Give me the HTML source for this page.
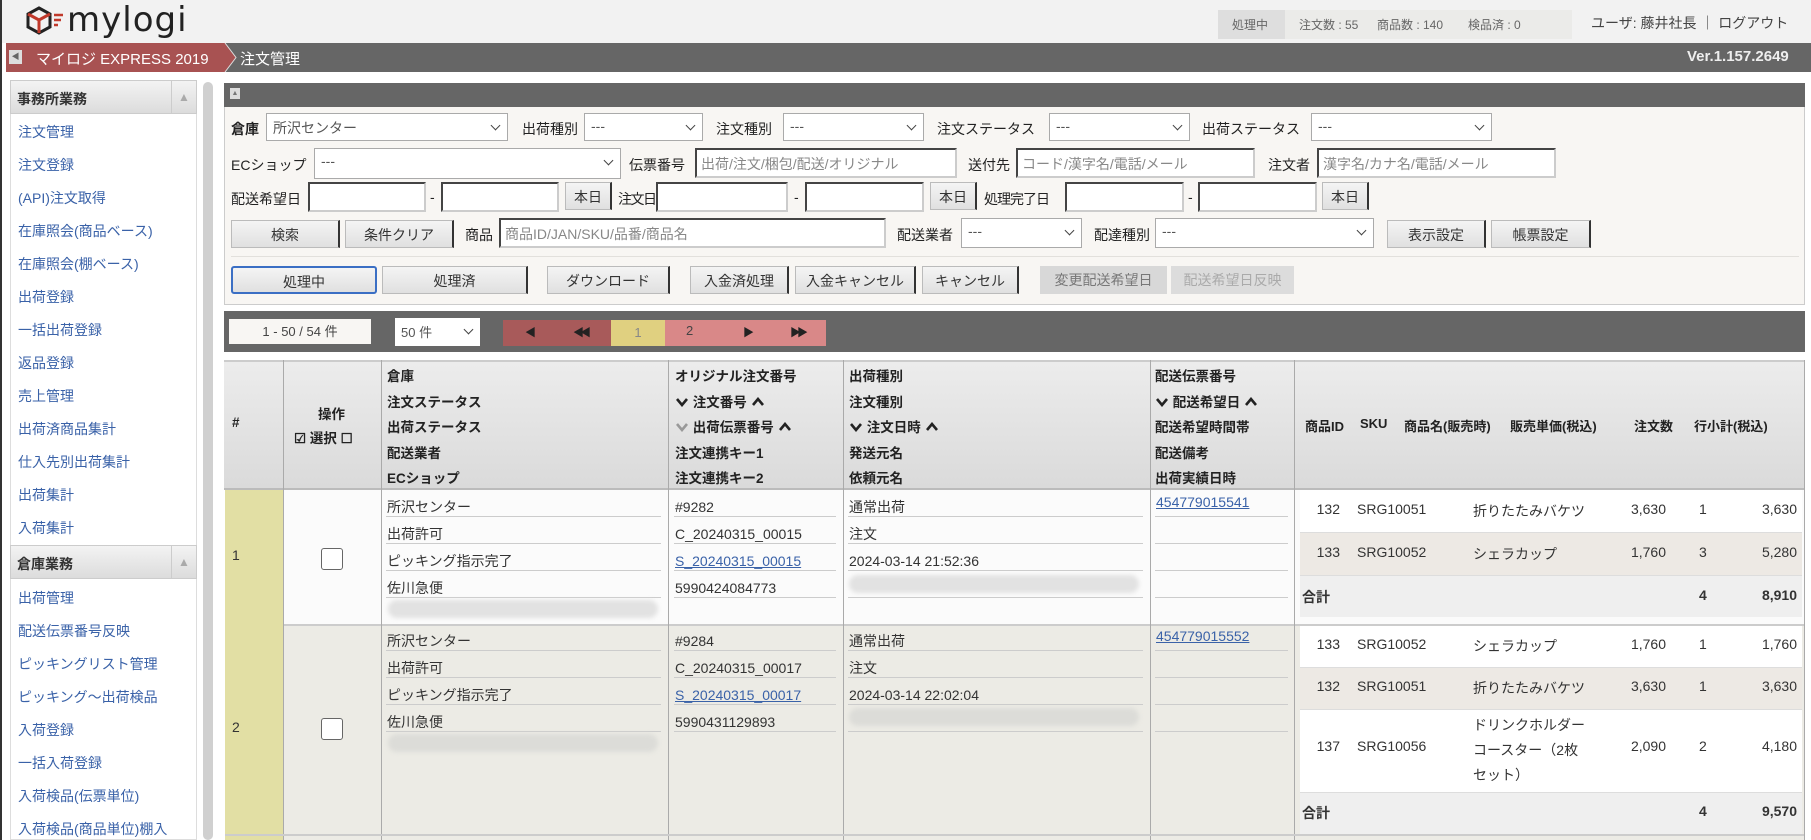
<!DOCTYPE html>
<html><head><meta charset="utf-8">
<style>
*{box-sizing:border-box;margin:0;padding:0}
body{width:1811px;height:840px;overflow:hidden;background:#fff;font-family:"Liberation Sans","Noto Sans CJK JP",sans-serif;font-size:14px;color:#333;position:relative}
.a{position:absolute;white-space:nowrap}
.sel{position:absolute;background:#fff;border:1px solid #aaa;height:28px;font-size:14px;color:#555;padding:4px 6px}
.sel:after{content:"";position:absolute;right:8px;top:8px;width:6px;height:6px;border-right:1.5px solid #444;border-bottom:1.5px solid #444;transform:rotate(45deg)}
.inp{position:absolute;background:#fff;border:2px solid #444;border-right-color:#ccc;border-bottom-color:#ccc;height:30px;font-size:14px;color:#888;padding:4px 4px}
.btn{position:absolute;background:linear-gradient(#f4f4f4,#e0e0e0);border:1px solid #bbb;border-right:2px solid #333;height:28px;font-size:14px;color:#333;text-align:center;line-height:28px}
.lbl{position:absolute;font-size:14px;color:#222;white-space:nowrap}
.side a{display:block;position:absolute;left:18px;color:#3a62a8;font-size:14px;text-decoration:none;white-space:nowrap}
.sh{position:absolute;left:10px;width:187px;height:34px;background:linear-gradient(#f3f3f3,#dcdcdc);border:1px solid #ccc;font-weight:bold;font-size:14px;padding:8px 6px;color:#333}
.sh b{position:absolute;right:0;top:0;width:25px;height:32px;border-left:1px solid #ccc;color:#aaa;font-size:12px;text-align:center;line-height:32px;font-weight:normal}
.cell{position:absolute;font-size:14px;color:#333;white-space:nowrap}
.ln{position:absolute;height:1px;background:#ccc}
.vl{position:absolute;width:1px;background:#aaa}
.hd{position:absolute;font-size:13.5px;font-weight:bold;color:#222;white-space:nowrap}
.lk{color:#3a62a8;text-decoration:underline}
.blur{position:absolute;height:18px;border-radius:9px;background:#e2e2e2;filter:blur(2px)}
.r{text-align:right}
.dn,.up{display:inline-block;width:14px;height:10px;vertical-align:0px}
</style></head><body>
<svg width="0" height="0" style="position:absolute"><defs>
<symbol id="dn" viewBox="0 0 14 10"><path d="M2 2L7 8L12 2" fill="none" stroke="currentColor" stroke-width="2.6"/></symbol>
<symbol id="up" viewBox="0 0 14 10"><path d="M2 8L7 2L12 8" fill="none" stroke="currentColor" stroke-width="2.6"/></symbol>
</defs></svg>
<!-- top bar -->
<div class="a" style="left:0;top:0;width:1811px;height:43px;background:#f2f2f2"></div>
<div class="a" style="left:0;top:0;width:2px;height:840px;background:#333"></div>
<svg class="a" style="left:25px;top:5px" width="40" height="36" viewBox="0 0 40 36">
<path d="M14 3 L25 9 L25 22 L14 28 L3 22 L3 9 Z" fill="none" stroke="#222" stroke-width="3"/>
<path d="M3 9 L14 15 L25 9 M14 15 L14 28" fill="none" stroke="#c0392b" stroke-width="3"/>
<path d="M29 10h9M29 15h7M29 20h4" stroke="#c0392b" stroke-width="2.5"/>
</svg>
<div class="a" style="left:67px;top:0px;font-size:34px;color:#222;font-family:'DejaVu Sans',sans-serif;letter-spacing:1px">mylogi</div>
<div class="a" style="left:1218px;top:10px;width:354px;height:29px;background:#ebebe9"></div>
<div class="a" style="left:1218px;top:10px;width:67px;height:29px;background:#dedede"></div>
<div class="a" style="left:1232px;top:16px;font-size:12px;color:#666">処理中</div>
<div class="a" style="left:1299px;top:16px;font-size:12px;color:#666">注文数 : 55</div>
<div class="a" style="left:1377px;top:16px;font-size:12px;color:#666">商品数 : 140</div>
<div class="a" style="left:1468px;top:16px;font-size:12px;color:#666">検品済 : 0</div>
<div class="a" style="left:1591px;top:13px;font-size:14px;color:#444">ユーザ: 藤井社長 ｜ ログアウト</div>
<!-- breadcrumb -->
<div class="a" style="left:6px;top:43px;width:1805px;height:29px;background:#666"></div>
<svg class="a" style="left:6px;top:43px" width="235" height="29"><path d="M0 0H219L230 14.5L219 29H0Z" fill="#a85252"/><path d="M219 0L230 14.5L219 29" fill="none" stroke="#ddd" stroke-width="1"/></svg>
<div class="a" style="left:9px;top:50px;width:13px;height:14px;background:#ddd;font-size:8px;color:#666;text-align:center;line-height:14px">◀</div>
<div class="a" style="left:36px;top:48px;color:#fff;font-size:15px">マイロジ EXPRESS 2019</div>
<div class="a" style="left:240px;top:48px;color:#fff;font-size:15px">注文管理</div>
<div class="a" style="left:1687px;top:48px;color:#eee;font-size:15px;font-weight:bold">Ver.1.157.2649</div>
<!-- sidebar -->
<div class="a" style="left:10px;top:80px;width:187px;height:760px;border:1px solid #ddd;background:#fff"></div>
<div class="a" style="left:203px;top:82px;width:10px;height:758px;background:#d0d0d0;border-radius:5px"></div>
<div class="sh" style="top:80px">事務所業務<b>▲</b></div>
<div class="side">
<a style="top:122px">注文管理</a><a style="top:155px">注文登録</a><a style="top:188px">(API)注文取得</a><a style="top:221px">在庫照会(商品ベース)</a><a style="top:254px">在庫照会(棚ベース)</a><a style="top:287px">出荷登録</a><a style="top:320px">一括出荷登録</a><a style="top:353px">返品登録</a><a style="top:386px">売上管理</a><a style="top:419px">出荷済商品集計</a><a style="top:452px">仕入先別出荷集計</a><a style="top:485px">出荷集計</a><a style="top:518px">入荷集計</a>
<a style="top:588px">出荷管理</a><a style="top:621px">配送伝票番号反映</a><a style="top:654px">ピッキングリスト管理</a><a style="top:687px">ピッキング〜出荷検品</a><a style="top:720px">入荷登録</a><a style="top:753px">一括入荷登録</a><a style="top:786px">入荷検品(伝票単位)</a><a style="top:819px">入荷検品(商品単位)棚入</a>
</div>
<div class="sh" style="top:545px">倉庫業務<b>▲</b></div>
<!-- search panel -->
<div class="a" style="left:224px;top:83px;width:1581px;height:222px;border:1px solid #ccc;background:#f8f6f3"></div>
<div class="a" style="left:224px;top:83px;width:1581px;height:24px;background:#666"></div>
<div class="a" style="left:230px;top:88px;width:10px;height:11px;background:#ddd;font-size:7px;color:#777;text-align:center;line-height:11px">▲</div>
<div class="lbl" style="left:231px;top:119px;font-weight:bold">倉庫</div>
<div class="sel" style="left:266px;top:113px;width:242px">所沢センター</div>
<div class="lbl" style="left:522px;top:119px">出荷種別</div><div class="sel" style="left:584px;top:113px;width:119px">---</div>
<div class="lbl" style="left:716px;top:119px">注文種別</div><div class="sel" style="left:783px;top:113px;width:141px">---</div>
<div class="lbl" style="left:937px;top:119px">注文ステータス</div><div class="sel" style="left:1049px;top:113px;width:141px">---</div>
<div class="lbl" style="left:1202px;top:119px">出荷ステータス</div><div class="sel" style="left:1311px;top:113px;width:181px">---</div>
<div class="lbl" style="left:231px;top:155px">ECショップ</div><div class="sel" style="left:314px;top:148px;width:307px;height:31px">---</div>
<div class="lbl" style="left:629px;top:155px">伝票番号</div><div class="inp" style="left:695px;top:148px;width:262px">出荷/注文/梱包/配送/オリジナル</div>
<div class="lbl" style="left:968px;top:155px">送付先</div><div class="inp" style="left:1016px;top:148px;width:239px">コード/漢字名/電話/メール</div>
<div class="lbl" style="left:1268px;top:155px">注文者</div><div class="inp" style="left:1317px;top:148px;width:239px">漢字名/カナ名/電話/メール</div>
<div class="lbl" style="left:231px;top:189px">配送希望日</div><div class="inp" style="left:308px;top:182px;width:118px"></div><div class="lbl" style="left:430px;top:189px">-</div><div class="inp" style="left:441px;top:182px;width:118px"></div><div class="btn" style="left:565px;top:182px;width:47px">本日</div>
<div class="lbl" style="left:618px;top:189px;letter-spacing:-1.5px">注文日</div><div class="inp" style="left:656px;top:182px;width:132px"></div><div class="lbl" style="left:794px;top:189px">-</div><div class="inp" style="left:805px;top:182px;width:119px"></div><div class="btn" style="left:930px;top:182px;width:47px">本日</div>
<div class="lbl" style="left:984px;top:189px;letter-spacing:-1px">処理完了日</div><div class="inp" style="left:1065px;top:182px;width:119px"></div><div class="lbl" style="left:1188px;top:189px">-</div><div class="inp" style="left:1198px;top:182px;width:119px"></div><div class="btn" style="left:1322px;top:182px;width:47px">本日</div>
<div class="btn" style="left:231px;top:220px;width:109px">検索</div><div class="btn" style="left:345px;top:220px;width:109px">条件クリア</div>
<div class="lbl" style="left:465px;top:225px">商品</div><div class="inp" style="left:499px;top:218px;width:387px">商品ID/JAN/SKU/品番/商品名</div>
<div class="lbl" style="left:897px;top:225px">配送業者</div><div class="sel" style="left:961px;top:218px;width:121px;height:30px">---</div>
<div class="lbl" style="left:1094px;top:225px">配達種別</div><div class="sel" style="left:1155px;top:218px;width:219px;height:30px">---</div>
<div class="btn" style="left:1387px;top:220px;width:99px">表示設定</div><div class="btn" style="left:1491px;top:220px;width:100px">帳票設定</div>
<div class="a" style="left:231px;top:256px;width:1568px;height:1px;background:#e2e0dc"></div>
<div class="btn" style="left:231px;top:266px;width:146px;border:2px solid #3b6fc4;border-radius:3px">処理中</div>
<div class="btn" style="left:382px;top:266px;width:146px">処理済</div>
<div class="btn" style="left:547px;top:266px;width:123px">ダウンロード</div>
<div class="btn" style="left:690px;top:266px;width:99px">入金済処理</div>
<div class="btn" style="left:795px;top:266px;width:121px">入金キャンセル</div>
<div class="btn" style="left:922px;top:266px;width:97px">キャンセル</div>
<div class="btn" style="left:1040px;top:266px;width:127px;background:#d8d8d8;border:none;color:#777">変更配送希望日</div>
<div class="btn" style="left:1171px;top:266px;width:123px;background:#dcdcdc;border:none;color:#aaa">配送希望日反映</div>
<!-- pager -->
<div class="a" style="left:224px;top:311px;width:1581px;height:41px;background:#666"></div>
<div class="a" style="left:229px;top:319px;width:142px;height:25px;background:#f8f6f3;font-size:13px;text-align:center;line-height:25px;color:#444">1 - 50 / 54 件</div>
<div class="sel" style="left:395px;top:318px;width:85px;height:28px;font-size:13px;border:none">50 件</div>
<div class="a" style="left:503px;top:320px;width:108px;height:26px;background:#a85a5a"></div>
<div class="a" style="left:611px;top:320px;width:54px;height:26px;background:#e0d080;text-align:center;line-height:26px;color:#888;font-size:13px">1</div>
<div class="a" style="left:665px;top:320px;width:161px;height:26px;background:#d98888"></div>
<div class="a" style="left:525px;top:324px;font-size:11px;color:#222">◀</div>
<div class="a" style="left:573px;top:324px;font-size:11px;color:#222;letter-spacing:-4px">◀◀</div>
<div class="a" style="left:686px;top:323px;font-size:13px;color:#444">2</div>
<div class="a" style="left:743px;top:324px;font-size:11px;color:#222">▶</div>
<div class="a" style="left:790px;top:324px;font-size:11px;color:#222;letter-spacing:-4px">▶▶</div>
<!-- table header -->
<div class="a" style="left:224px;top:360px;width:1581px;height:130px;background:linear-gradient(#ececec,#dadada);border-top:2px solid #ccc;border-bottom:2px solid #bbb"></div>
<div class="vl" style="left:283px;top:360px;height:480px"></div>
<div class="vl" style="left:381px;top:360px;height:480px"></div>
<div class="vl" style="left:668px;top:360px;height:480px"></div>
<div class="vl" style="left:843px;top:360px;height:480px"></div>
<div class="vl" style="left:1150px;top:360px;height:480px"></div>
<div class="vl" style="left:1294px;top:360px;height:480px"></div>
<div class="vl" style="left:1804px;top:360px;height:480px"></div>
<div class="hd" style="left:232px;top:415px">#</div>
<div class="hd" style="left:318px;top:403px">操作</div>
<div class="hd" style="left:294px;top:427px">☑ 選択 ☐</div>
<div class="hd" style="left:387px;top:364px;line-height:25.5px">倉庫<br>注文ステータス<br>出荷ステータス<br>配送業者<br>ECショップ</div>
<div class="hd" style="left:675px;top:364px;line-height:25.5px">オリジナル注文番号<br><svg class="dn"><use href="#dn"/></svg> 注文番号 <svg class="up"><use href="#up"/></svg><br><svg class="dn" style="color:#999"><use href="#dn"/></svg> 出荷伝票番号 <svg class="up"><use href="#up"/></svg><br>注文連携キー1<br>注文連携キー2</div>
<div class="hd" style="left:849px;top:364px;line-height:25.5px">出荷種別<br>注文種別<br><svg class="dn"><use href="#dn"/></svg> 注文日時 <svg class="up"><use href="#up"/></svg><br>発送元名<br>依頼元名</div>
<div class="hd" style="left:1155px;top:364px;line-height:25.5px">配送伝票番号<br><svg class="dn"><use href="#dn"/></svg> 配送希望日 <svg class="up"><use href="#up"/></svg><br>配送希望時間帯<br>配送備考<br>出荷実績日時</div>
<div class="hd" style="left:1305px;top:416px;font-size:13px">商品ID</div>
<div class="hd" style="left:1360px;top:416px;font-size:13px">SKU</div>
<div class="hd" style="left:1404px;top:416px;font-size:13px">商品名(販売時)</div>
<div class="hd" style="left:1510px;top:416px;font-size:13px">販売単価(税込)</div>
<div class="hd" style="left:1634px;top:416px;font-size:13px">注文数</div>
<div class="hd" style="left:1694px;top:416px;font-size:13px">行小計(税込)</div>
<!-- row 1 -->
<div class="a" style="left:225px;top:490px;width:1579px;height:134px;background:#fbfbfb"></div>
<div class="a" style="left:225px;top:490px;width:58px;height:134px;background:#e2dfa4"></div>
<div class="a" style="left:232px;top:547px;font-size:14px">1</div>
<div class="a" style="left:321px;top:548px;width:22px;height:22px;border:1px solid #666;border-radius:3px;background:#fff"></div>
<!-- row 2 -->
<div class="a" style="left:225px;top:624px;width:1579px;height:216px;background:#ecebe5;border-top:2px solid #ccc"></div>
<div class="a" style="left:225px;top:624px;width:58px;height:216px;background:#e2dfa4"></div>
<div class="a" style="left:232px;top:719px;font-size:14px">2</div>
<div class="a" style="left:321px;top:718px;width:22px;height:22px;border:1px solid #666;border-radius:3px;background:#fff"></div>
<div class="vl" style="left:283px;top:490px;height:350px"></div><div class="vl" style="left:381px;top:490px;height:350px"></div><div class="vl" style="left:668px;top:490px;height:350px"></div><div class="vl" style="left:843px;top:490px;height:350px"></div><div class="vl" style="left:1150px;top:490px;height:350px"></div><div class="vl" style="left:1294px;top:490px;height:350px"></div>
<!-- row1 cells -->
<div class="cell" style="left:387px;top:494px;line-height:27px">所沢センター<br>出荷許可<br>ピッキング指示完了<br>佐川急便</div>
<div class="ln" style="left:386px;top:516px;width:275px"></div><div class="ln" style="left:386px;top:543px;width:275px"></div><div class="ln" style="left:386px;top:570px;width:275px"></div><div class="ln" style="left:386px;top:597px;width:275px"></div>
<div class="blur" style="left:388px;top:600px;width:270px"></div>
<div class="cell" style="left:675px;top:494px;line-height:27px">#9282<br>C_20240315_00015<br><span class="lk">S_20240315_00015</span><br>5990424084773</div>
<div class="ln" style="left:674px;top:516px;width:162px"></div><div class="ln" style="left:674px;top:543px;width:162px"></div><div class="ln" style="left:674px;top:570px;width:162px"></div><div class="ln" style="left:674px;top:597px;width:162px"></div>
<div class="cell" style="left:849px;top:494px;line-height:27px">通常出荷<br>注文<br>2024-03-14 21:52:36</div>
<div class="ln" style="left:848px;top:516px;width:295px"></div><div class="ln" style="left:848px;top:543px;width:295px"></div><div class="ln" style="left:848px;top:570px;width:295px"></div><div class="ln" style="left:848px;top:597px;width:295px"></div>
<div class="blur" style="left:849px;top:575px;width:290px"></div>
<div class="cell lk" style="left:1156px;top:494px">454779015541</div>
<div class="ln" style="left:1155px;top:516px;width:133px"></div><div class="ln" style="left:1155px;top:543px;width:133px"></div><div class="ln" style="left:1155px;top:570px;width:133px"></div><div class="ln" style="left:1155px;top:597px;width:133px"></div>
<!-- row1 products -->
<div class="a" style="left:1300px;top:490px;width:502px;height:42px;background:#fff"></div>
<div class="a" style="left:1300px;top:532px;width:502px;height:44px;background:#ede9e4;border-top:1px solid #ddd;border-bottom:1px solid #ddd"></div>
<div class="a" style="left:1300px;top:576px;width:502px;height:41px;background:#efefef"></div>
<div class="cell r" style="left:1300px;top:501px;width:40px">132</div><div class="cell" style="left:1357px;top:501px">SRG10051</div><div class="cell" style="left:1473px;top:501px">折りたたみバケツ</div><div class="cell r" style="left:1600px;top:501px;width:66px">3,630</div><div class="cell" style="left:1699px;top:501px">1</div><div class="cell r" style="left:1720px;top:501px;width:77px">3,630</div>
<div class="cell r" style="left:1300px;top:544px;width:40px">133</div><div class="cell" style="left:1357px;top:544px">SRG10052</div><div class="cell" style="left:1473px;top:544px">シェラカップ</div><div class="cell r" style="left:1600px;top:544px;width:66px">1,760</div><div class="cell" style="left:1699px;top:544px">3</div><div class="cell r" style="left:1720px;top:544px;width:77px">5,280</div>
<div class="cell" style="left:1302px;top:587px;font-weight:bold">合計</div><div class="cell" style="left:1699px;top:587px;font-weight:bold">4</div><div class="cell r" style="left:1720px;top:587px;width:77px;font-weight:bold">8,910</div>
<!-- row2 cells -->
<div class="cell" style="left:387px;top:628px;line-height:27px">所沢センター<br>出荷許可<br>ピッキング指示完了<br>佐川急便</div>
<div class="ln" style="left:386px;top:650px;width:275px"></div><div class="ln" style="left:386px;top:677px;width:275px"></div><div class="ln" style="left:386px;top:704px;width:275px"></div><div class="ln" style="left:386px;top:731px;width:275px"></div>
<div class="blur" style="left:388px;top:734px;width:270px;background:#dcdcd8"></div>
<div class="cell" style="left:675px;top:628px;line-height:27px">#9284<br>C_20240315_00017<br><span class="lk">S_20240315_00017</span><br>5990431129893</div>
<div class="ln" style="left:674px;top:650px;width:162px"></div><div class="ln" style="left:674px;top:677px;width:162px"></div><div class="ln" style="left:674px;top:704px;width:162px"></div><div class="ln" style="left:674px;top:731px;width:162px"></div>
<div class="cell" style="left:849px;top:628px;line-height:27px">通常出荷<br>注文<br>2024-03-14 22:02:04</div>
<div class="ln" style="left:848px;top:650px;width:295px"></div><div class="ln" style="left:848px;top:677px;width:295px"></div><div class="ln" style="left:848px;top:704px;width:295px"></div><div class="ln" style="left:848px;top:731px;width:295px"></div>
<div class="blur" style="left:849px;top:708px;width:290px;background:#dcdcd8"></div>
<div class="cell lk" style="left:1156px;top:628px">454779015552</div>
<div class="ln" style="left:1155px;top:650px;width:133px"></div><div class="ln" style="left:1155px;top:677px;width:133px"></div><div class="ln" style="left:1155px;top:704px;width:133px"></div><div class="ln" style="left:1155px;top:731px;width:133px"></div>
<!-- row2 products -->
<div class="a" style="left:1300px;top:626px;width:502px;height:41px;background:#fff"></div>
<div class="a" style="left:1300px;top:667px;width:502px;height:43px;background:#ede9e4;border-top:1px solid #ddd;border-bottom:1px solid #ddd"></div>
<div class="a" style="left:1300px;top:710px;width:502px;height:82px;background:#fff"></div>
<div class="a" style="left:1300px;top:792px;width:502px;height:42px;background:#efefef;border-top:1px solid #ddd"></div>
<div class="cell r" style="left:1300px;top:636px;width:40px">133</div><div class="cell" style="left:1357px;top:636px">SRG10052</div><div class="cell" style="left:1473px;top:636px">シェラカップ</div><div class="cell r" style="left:1600px;top:636px;width:66px">1,760</div><div class="cell" style="left:1699px;top:636px">1</div><div class="cell r" style="left:1720px;top:636px;width:77px">1,760</div>
<div class="cell r" style="left:1300px;top:678px;width:40px">132</div><div class="cell" style="left:1357px;top:678px">SRG10051</div><div class="cell" style="left:1473px;top:678px">折りたたみバケツ</div><div class="cell r" style="left:1600px;top:678px;width:66px">3,630</div><div class="cell" style="left:1699px;top:678px">1</div><div class="cell r" style="left:1720px;top:678px;width:77px">3,630</div>
<div class="cell r" style="left:1300px;top:738px;width:40px">137</div><div class="cell" style="left:1357px;top:738px">SRG10056</div><div class="cell" style="left:1473px;top:713px;line-height:25px">ドリンクホルダー<br>コースター（2枚<br>セット）</div><div class="cell r" style="left:1600px;top:738px;width:66px">2,090</div><div class="cell" style="left:1699px;top:738px">2</div><div class="cell r" style="left:1720px;top:738px;width:77px">4,180</div>
<div class="cell" style="left:1302px;top:803px;font-weight:bold">合計</div><div class="cell" style="left:1699px;top:803px;font-weight:bold">4</div><div class="cell r" style="left:1720px;top:803px;width:77px;font-weight:bold">9,570</div>
<div class="a" style="left:225px;top:834px;width:1579px;height:2px;background:#ccc"></div>
</body></html>
